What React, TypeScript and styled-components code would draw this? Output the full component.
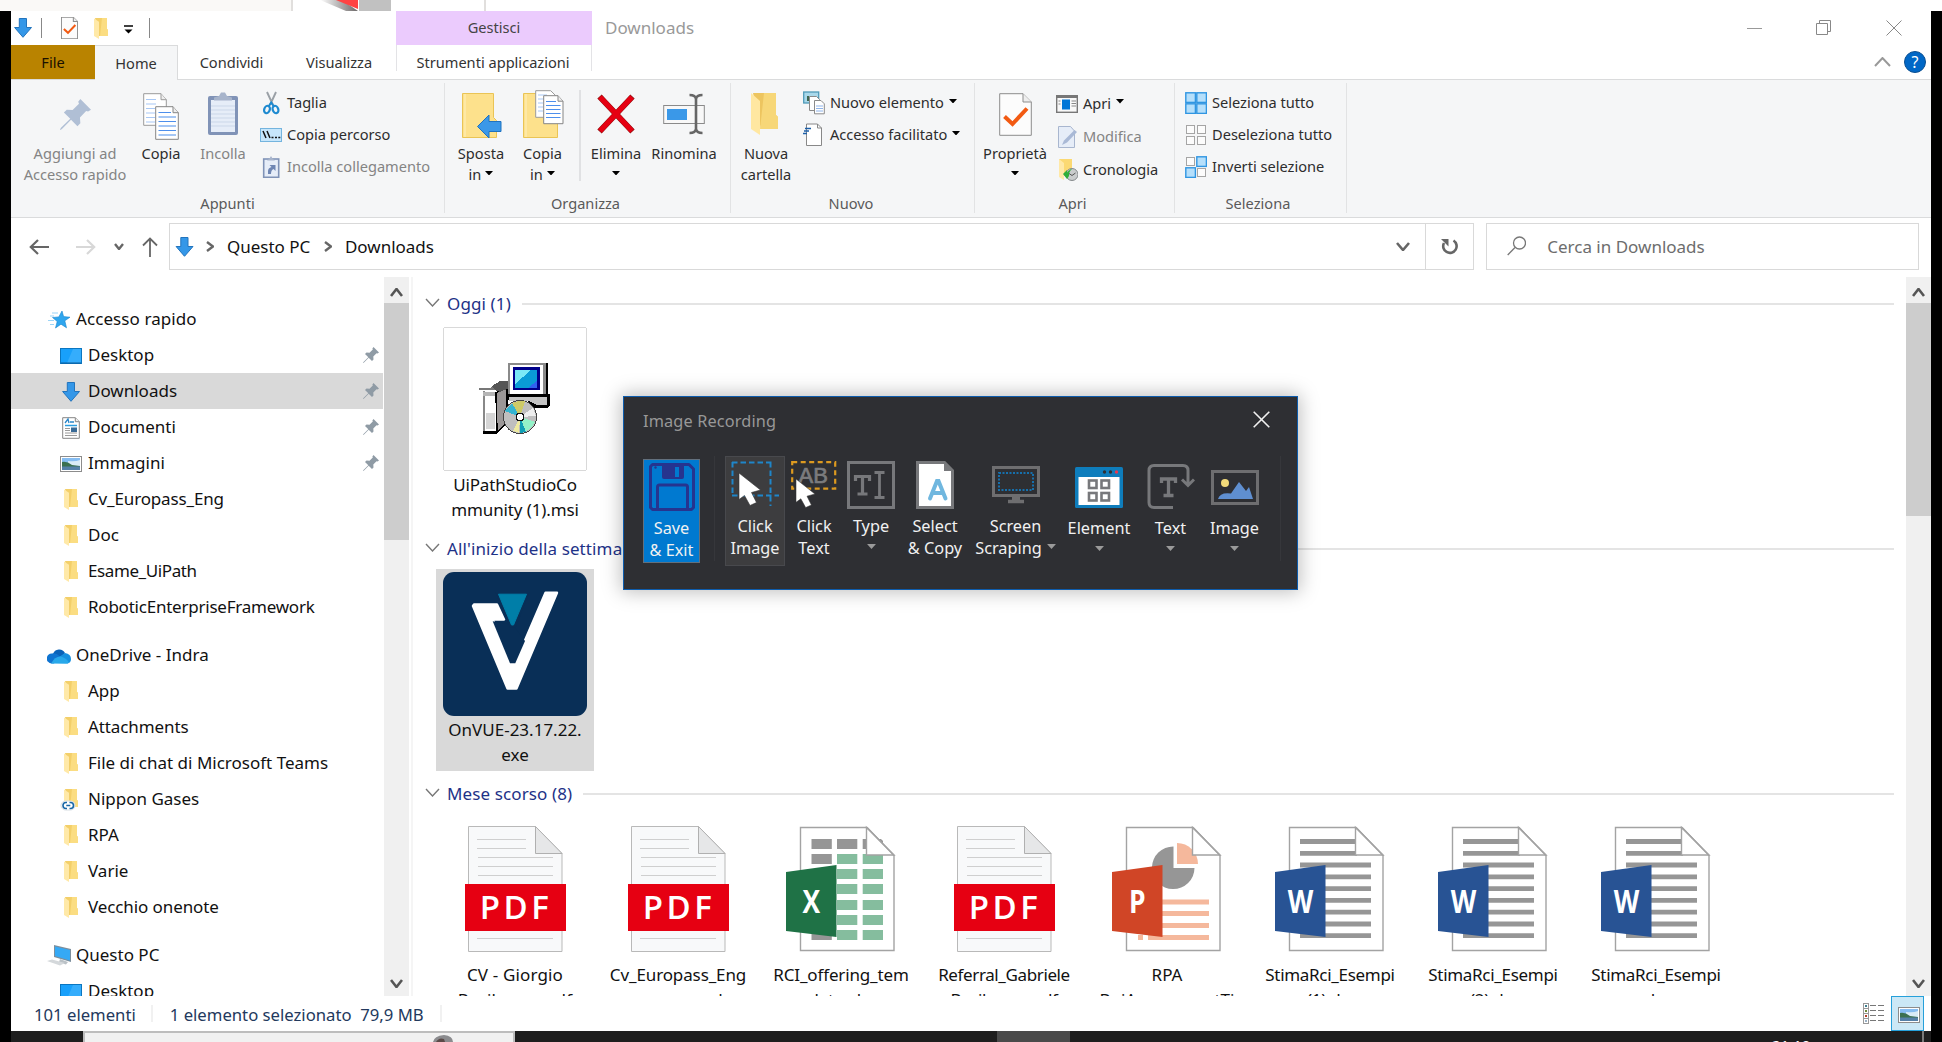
import React from "react";
import styled, { createGlobalStyle, css } from "styled-components";

const Global = createGlobalStyle`
  * { box-sizing: border-box; }
  html, body { margin: 0; padding: 0; background: #000; overflow: hidden; }
  body { font-family: "Noto Sans", "Open Sans", "Liberation Sans", sans-serif; font-size: 17px; color: #111; }
  svg { display: block; flex: none; }
`;

/* ---------- shell ---------- */
const Screen = styled.div`
  position: relative;
  width: 1942px;
  height: 1042px;
  display: flex;
  flex-direction: column;
  background: #000;
  overflow: hidden;
  white-space: nowrap;
`;
const TopStrip = styled.div`
  height: 11px;
  flex: none;
  display: flex;
  background: #fff;
`;
const StripPart = styled.div<{ w: number; bg?: string; line?: boolean }>`
  width: ${(p) => p.w}px;
  background: ${(p) => p.bg || "#fff"};
  border-right: ${(p) => (p.line ? "2px solid #e1dfdd" : "0")};
`;
const Window = styled.div`
  width: 1920px;
  height: 1020px;
  margin-left: 11px;
  background: #fff;
  display: flex;
  flex-direction: column;
`;
const Taskbar = styled.div`
  width: 1920px;
  height: 11px;
  margin-left: 11px;
  background: #1e1e1e;
  display: flex;
  overflow: hidden;
`;
const TaskSearch = styled.div`
  margin-left: 72px;
  width: 432px;
  height: 20px;
  background: #f1f1f1;
  border: 2px solid #bdbdbd;
  border-bottom: 0;
  padding-left: 346px;
`;
const TaskActive = styled.div`
  margin-left: 482px;
  width: 73px;
  background: #4a4a4a;
`;
const Clock = styled.div`
  margin-left: 702px;
  width: 150px;
  padding-top: 5px;
  color: #fff;
  font-size: 15px;
  line-height: 18px;
`;
const TaskEdge = styled.div`
  width: 2px;
  background: #7a7a7a;
`;

/* ---------- title bar ---------- */
const TitleBar = styled.div`
  height: 34px;
  display: flex;
  align-items: center;
`;
const QuickBar = styled.div`
  width: 385px;
  height: 34px;
  padding-left: 3px;
  display: flex;
  align-items: center;
`;
const Divider = styled.div<{ l: number; r: number }>`
  width: 1px;
  height: 20px;
  background: #888;
  margin: 0 ${(p) => p.r}px 0 ${(p) => p.l}px;
`;
const ManageTab = styled.div`
  width: 196px;
  height: 34px;
  background: #ebcbfd;
  color: #444;
  font-size: 14.6px;
  line-height: 32px;
  text-align: center;
`;
const WindowTitle = styled.div`
  margin-left: 13px;
  line-height: 34px;
  color: #999;
  flex: 1;
`;
const Controls = styled.div`
  display: flex;
  width: 184px;
  gap: 54px;
  align-items: center;
`;

/* ---------- tabs ---------- */
const Tabs = styled.div`
  height: 35px;
  display: flex;
  border-bottom: 1px solid #dadbdc;
`;
const Tab = styled.div<{ w: number; kind?: "file" | "active" | "tool" }>`
  width: ${(p) => p.w}px;
  height: 34px;
  line-height: 34px;
  text-align: center;
  font-size: 14.6px;
  color: #333;
  ${(p) =>
    p.kind === "file" &&
    css`
      background: #b98300;
      color: #1a1000;
    `}
  ${(p) =>
    p.kind === "active" &&
    css`
      height: 35px;
      background: #f5f6f7;
      border: 1px solid #dadbdc;
      border-bottom: 0;
      border-left: 0;
    `}
  ${(p) =>
    p.kind === "tool" &&
    css`
      border: solid #e3e3e6;
      border-width: 0 1px;
      height: 26px;
      padding-right: 2px;
    `}
`;
const TabsEnd = styled.div`
  margin-left: auto;
  display: flex;
  align-items: center;
  gap: 13px;
  padding-right: 5px;
`;
const Help = styled.div`
  width: 22px;
  height: 22px;
  border-radius: 50%;
  border: 1px solid #0b4f91;
  background: #0067c6;
  color: #fff;
  font-size: 16px;
  line-height: 20px;
  text-align: center;
`;

/* ---------- ribbon ---------- */
const Ribbon = styled.div`
  height: 138px;
  background: #f5f6f7;
  border-bottom: 1px solid #dadbdc;
  display: flex;
  padding: 3px 0 4px;
`;
const Group = styled.div<{ w: number }>`
  width: ${(p) => p.w}px;
  border-right: 1px solid #e2e3e4;
  display: flex;
  flex-direction: column;
`;
const GroupBody = styled.div<{ l: number }>`
  display: flex;
  height: 109px;
  padding-left: ${(p) => p.l}px;
`;
const GroupName = styled.div<{ r?: number }>`
  padding-right: ${(p) => p.r || 0}px;
  text-align: center;
  font-size: 14.6px;
  line-height: 24px;
  height: 22px;
  color: #5a5a5a;
`;
const Big = styled.div<{ w: number; l?: number; off?: boolean }>`
  width: ${(p) => p.w}px;
  margin-left: ${(p) => p.l || 0}px;
  padding-top: 5px;
  display: flex;
  flex-direction: column;
  align-items: center;
  font-size: 14.6px;
  line-height: 21px;
  color: ${(p) => (p.off ? "#848484" : "#2d2d2d")};
`;
const BigIcon = styled.div`
  height: 52px;
  margin-bottom: 3px;
  display: flex;
  align-items: center;
`;
const Line = styled.div`
  height: 21px;
  display: flex;
  align-items: center;
  gap: 4px;
  & > svg { margin-bottom: 3px; }
`;
const Stack = styled.div<{ l: number; row?: number; t?: number }>`
  margin-left: ${(p) => p.l}px;
  padding-top: ${(p) => p.t ?? 4}px;
  display: grid;
  grid-auto-rows: ${(p) => p.row || 32}px;
  align-content: start;
`;
const Small = styled.div<{ off?: boolean }>`
  display: flex;
  align-items: center;
  gap: 5px;
  font-size: 14.6px;
  color: ${(p) => (p.off ? "#848484" : "#2d2d2d")};
  & > span { margin-top: -2px; }
  & > span + svg { margin-bottom: 4px; }
`;
const ThickSep = styled.div`
  width: 2px;
  height: 91px;
  margin: 7px 0 0 6px;
  background: #e0e1e3;
`;

/* ---------- address row ---------- */
const AddressRow = styled.div`
  height: 59px;
  padding: 5px 12px 0 0;
  display: flex;
`;
const NavButtons = styled.div`
  width: 158px;
  height: 47px;
  padding-left: 18px;
  display: flex;
  align-items: center;
`;
const Gap = styled.div<{ w: number }>`
  width: ${(p) => p.w}px;
  flex: none;
`;
const Field = styled.div<{ w: number }>`
  width: ${(p) => p.w}px;
  height: 47px;
  border: 1px solid #d9d9d9;
  display: flex;
  align-items: center;
`;
const Crumb = styled.span<{ w: number }>`
  width: ${(p) => p.w}px;
  line-height: 45px;
  height: 45px;
  color: #111;
`;
const RefreshCell = styled.div`
  width: 48px;
  height: 45px;
  margin-left: auto;
  border-left: 1px solid #d9d9d9;
  display: flex;
  align-items: center;
  justify-content: center;
`;
const SearchText = styled.span`
  margin-left: 21px;
  line-height: 46px;
  height: 45px;
  color: #6d6d6d;
`;
const FieldEnd = styled.div`
  margin-left: auto;
  display: flex;
  align-items: center;
  gap: 15px;
`;

/* ---------- body ---------- */
const Body = styled.div`
  height: 719px;
  display: flex;
  overflow: hidden;
`;
const Tree = styled.div`
  width: 373px;
  padding-top: 24px;
  overflow: hidden;
`;
const TreeRow = styled.div<{ root?: boolean; selected?: boolean; gap?: boolean }>`
  height: 36px;
  width: 372px;
  margin-top: ${(p) => (p.gap ? 12 : 0)}px;
  padding: 0 4px 0 ${(p) => (p.root ? 36 : 48)}px;
  background: ${(p) => (p.selected ? "#d9d9d9" : "transparent")};
  display: flex;
  align-items: center;
`;
const TreeIcon = styled.div`
  width: 24px;
  height: 36px;
  padding-top: 1px;
  display: flex;
  align-items: center;
  justify-content: center;
`;
const TreeText = styled.span<{ ls?: number }>`
  margin-left: 5px;
  flex: 1;
  line-height: 36px;
  height: 36px;
  letter-spacing: ${(p) => p.ls || 0}px;
`;
const ScrollBar = styled.div<{ w: number }>`
  width: ${(p) => p.w}px;
  background: #f0f0f0;
  display: flex;
  flex-direction: column;
  align-items: center;
`;
const ScrollEnd = styled.div<{ t?: number }>`
  height: 26px;
  padding-top: ${(p) => p.t || 0}px;
  display: flex;
  align-items: center;
`;
const Thumb = styled.div<{ h: number }>`
  width: 100%;
  height: ${(p) => p.h}px;
  background: #cdcdcd;
  margin-bottom: auto;
`;
const Pane = styled.div`
  width: 1495px;
  margin-left: 2px;
  border-left: 2px solid #f5f5f5;
  padding-top: 9px;
  overflow: hidden;
`;
const Section = styled.div`
  height: 245px;
`;
const SectionHead = styled.div`
  height: 36px;
  padding: 0 12px 0 12px;
  display: flex;
  align-items: center;
  color: #1e3287;
  letter-spacing: 0.12px;
  & > svg { margin-bottom: 3px; }
  & > span { margin: -2px 11px 0 7px; }
`;
const Rule = styled.div`
  flex: 1;
  height: 2px;
  background: #e4e4e4;
`;
const Tiles = styled.div`
  display: flex;
  gap: 5px;
  margin: 2px 0 0 23px;
`;
const Tile = styled.div<{ selected?: boolean }>`
  width: 158px;
  height: 202px;
  padding-top: 3px;
  background: ${(p) => (p.selected ? "#d9d9d9" : "transparent")};
  display: flex;
  flex-direction: column;
  align-items: center;
  & > svg { margin-bottom: 1px; }
`;
const TileText = styled.div<{ ls?: number }>`
  line-height: 25px;
  text-align: center;
  letter-spacing: ${(p) => p.ls || 0}px;
`;

/* ---------- status bar ---------- */
const Status = styled.div`
  height: 35px;
  display: flex;
  align-items: center;
  padding-left: 23px;
  font-size: 16.7px;
  color: #23395d;
  & > span { margin-top: 1px; }
`;
const StatusSep = styled.div<{ l: number; r: number }>`
  width: 2px;
  height: 17px;
  margin: 0 ${(p) => p.r}px 0 ${(p) => p.l}px;
  background: #f1f1f1;
`;
const Views = styled.div`
  margin-left: auto;
  padding-right: 7px;
  display: flex;
  align-items: center;
  gap: 7px;
`;
const ViewOn = styled.div`
  width: 33px;
  height: 35px;
  border: 1px solid #26a0da;
  background: #cbe8f6;
  padding: 10px 0 0 6px;
`;

/* ---------- recorder ---------- */
const Recorder = styled.div`
  position: absolute;
  left: 623px;
  top: 396px;
  width: 675px;
  height: 194px;
  background: #2e2f33;
  border: 1px solid #0d5cad;
  box-shadow: 0 0 18px 2px rgba(0, 0, 0, 0.26);
  color: #f1f1f1;
  font-size: 16.3px;
`;
const RecHead = styled.div`
  height: 50px;
  padding: 0 27px 2px 19px;
  display: flex;
  align-items: center;
  justify-content: space-between;
  color: #989898;
  & > span { letter-spacing: 0.15px; }
  & > svg { margin-bottom: 3px; }
`;
const RecTools = styled.div`
  display: flex;
  align-items: flex-start;
  padding-top: 9px;
`;
const RecSep = styled.div<{ l: number; r: number }>`
  width: 1px;
  height: 105px;
  margin: 0 ${(p) => p.r}px 0 ${(p) => p.l}px;
  background: #36373b;
`;
const Tool = styled.div<{ w: number; kind?: "save" | "on"; drop?: number; l?: number }>`
  width: ${(p) => p.w}px;
  height: 110px;
  margin-left: ${(p) => p.l || 0}px;
  padding-top: ${(p) => 4 + (p.drop || 0)}px;
  border: 1px solid transparent;
  display: flex;
  flex-direction: column;
  align-items: center;
  ${(p) =>
    p.kind === "on" &&
    css`
      background: #3d3d3f;
      border-color: #48494d;
    `}
  ${(p) =>
    p.kind === "save" &&
    css`
      height: 104px;
      margin-top: 3px;
      padding-top: 3px;
      background: #0079d0;
      border-color: #63707d;
    `}
`;
const ToolIcon = styled.div`
  height: 48px;
  margin-bottom: 6px;
  display: flex;
  align-items: center;
`;
const ToolLine = styled.div`
  height: 22px;
  line-height: 22px;
  display: flex;
  align-items: center;
  gap: 5px;
  & > svg { margin-bottom: 4px; }
`;

/* ---------- glyphs ---------- */
const Caret = ({ w = 8, color = "#000" }: { w?: number; color?: string }) => (
  <svg width={w} height={w / 2 + 0.5} viewBox="0 0 8 4.5"><path d="M0 0h8L4 4.5z" fill={color} /></svg>
);
const Chevron = ({ w = 14, h = 8, dir = "down", color = "#666", sw = 2 }: any) => {
  const d = {
    down: `M1 1L${w / 2} ${h - 1}L${w - 1} 1`,
    up: `M1 ${h - 1}L${w / 2} 1L${w - 1} ${h - 1}`,
    right: `M1 1L${w - 1} ${h / 2}L1 ${h - 1}`,
  }[dir as "down"];
  return <svg width={w} height={h}><path d={d} fill="none" stroke={color} strokeWidth={sw} /></svg>;
};
const DownArrow = ({ w = 18, h = 20 }) => (
  <svg width={w} height={h} viewBox="0 0 18 20">
    <path d="M5.3.5h7.2v9h5L9 19.3.6 9.5h4.7z" fill="#3497e8" stroke="#2274bd" />
  </svg>
);
const FolderIcon = ({ w = 14, h = 21, link = false }) => (
  <svg width={w} height={h} viewBox="0 0 14 21" overflow="visible">
    <path d="M1 0h12v11l1 1v6H5z" fill="#f3cf69" />
    <path d="M8 0h5v11l1 1v6H6z" fill="#fbdd82" />
    <path d="M0 0.5l5 3.2v17.3L0 18z" fill="#ffe9a8" />
    {link && (
      <g>
        <rect x="-3" y="12" width="14" height="9" rx="4.5" fill="#fff" stroke="#d8dde2" />
        <path d="M3 13.5H2a3 3 0 000 6h1M5.500 13.500h1a3 3 0 010 6h-1M2.300 16.500h4" fill="none" stroke="#1766a6" strokeWidth="1.6" />
      </g>
    )}
  </svg>
);
const CheckDoc = ({ w, h, sw = 1 }: { w: number; h: number; sw?: number }) => (
  <svg width={w} height={h} viewBox="0 0 33 43">
    <path d="M.7.7H24l8.300 8.300v33.300H.7z" fill="#fcfcfc" stroke="#8d8d8d" strokeWidth={sw} />
    <path d="M24 .7V9h8.300" fill="#eee" stroke="#8d8d8d" strokeWidth={sw} />
    <path d="M5.500 23.500l8 7.500L28 15.500" fill="none" stroke="#f25a12" strokeWidth="4" />
  </svg>
);
const PinIcon = ({ size = 16, color = "#8f9ba5" }) => (
  <svg width={size} height={size} viewBox="0 0 16 16">
    <path d="M10.500 0L16 5.500l-1.500 1-1-.3-3.200 3.300.2 3-1.500 1.500-3.300-3.300L1 15.500.2 16 0 15.700l.5-.8 4.800-4.700L2 7l1.500-1.500 3 .2 3.300-3.300-.4-1z" fill={color} />
  </svg>
);
const CopyPages = ({ w = 36, h = 51 }) => (
  <svg width={w} height={h} viewBox="0 0 36 51">
    <path d="M.7 4.700h17.300l5.300 6v25.600H.7z" fill="#fff" stroke="#9a9a9a" />
    <path d="M18 4.700v6h5.300" fill="#eee" stroke="#9a9a9a" />
    <path d="M3 10.500h10M3 15h10M3 19.500h9M3 24h9M3 28.500h9M3 33h9" stroke="#a8c8f5" strokeWidth="1.200" />
    <path d="M12.700 17.700H30l5.300 6v26.600H12.700z" fill="#fff" stroke="#858585" />
    <path d="M30 17.700v6h5.300" fill="#eee" stroke="#858585" />
    <path d="M15.500 23.500H28M15.500 28h17.500M15.500 32.500h17.500M15.500 37h17.500M15.500 41.500h17.500M15.500 46h17.500" stroke="#4d8fec" strokeWidth="1.200" />
  </svg>
);
const Clipboard = () => (
  <svg width="32" height="44" viewBox="0 0 32 44">
    <rect x="1" y="4" width="30" height="39" rx="2" fill="#8093b7" />
    <rect x="4" y="8" width="24" height="32" fill="#e6edf8" />
    <path d="M4 14h24M4 18h24M4 22h24M4 26h24M4 30h24M4 34h24" stroke="#cbd7e9" />
    <path d="M7 8.500V5.500L12 4l2-3.500h4L20 4l5 1.500v3z" fill="#a7b4cb" />
  </svg>
);
const Scissors = () => (
  <svg width="22" height="24" viewBox="0 0 22 24">
    <path d="M7 1l6 13M16 1L10 14" stroke="#9aa0a6" strokeWidth="1.900" fill="none" />
    <ellipse cx="7" cy="18.500" rx="2.800" ry="3.800" fill="none" stroke="#1e8ad0" strokeWidth="2.200" transform="rotate(20 7 18.500)" />
    <ellipse cx="15.500" cy="18.500" rx="2.800" ry="3.800" fill="none" stroke="#1e8ad0" strokeWidth="2.200" transform="rotate(-20 15.500 18.500)" />
    <path d="M8.500 15.500l2.700-4 2.700 4" fill="none" stroke="#1e8ad0" strokeWidth="2" />
  </svg>
);
const PathIcon = () => (
  <svg width="22" height="14" viewBox="0 0 22 14">
    <rect x=".5" y=".5" width="21" height="13" fill="#c7e6fb" stroke="#74b4de" />
    <path d="M3 3l3 7M7 3l3 7" stroke="#111" strokeWidth="1.500" />
    <path d="M11.500 9.500h2M15 9.500h2M18.300 9.500h2" stroke="#111" strokeWidth="1.600" />
  </svg>
);
const LinkPaste = () => (
  <svg width="22" height="22" viewBox="0 0 22 22">
    <rect x="3.700" y="3" width="15" height="18.300" fill="#e6edf8" stroke="#8093b7" strokeWidth="1.600" />
    <path d="M7 4.500l2.500-2L11 0l1.500 2.500 2.500 2z" fill="#a7b4cb" />
    <path d="M8 18v-3q0-3 3.500-4L9.500 9h6v6l-2-2q-2.500 1-2.500 5z" fill="#6f86b3" />
  </svg>
);
const MoveTo = () => (
  <svg width="42" height="51" viewBox="0 0 42 51">
    <path d="M2.500 4.500h31v24l3 3v17h-34z" fill="#fde18c" stroke="#eac455" />
    <path d="M5 5v43" stroke="#fff0bd" />
    <path d="M17.500 37.500L29 26v6.500h12v10H29V49z" fill="#3b98e8" stroke="#1f72c0" />
  </svg>
);
const CopyTo = () => (
  <svg width="44" height="51" viewBox="0 0 44 51">
    <path d="M2.500 4.500h30l4 27v17h-34z" fill="#fde18c" stroke="#eac455" />
    <path d="M5 5v43" stroke="#fff0bd" />
    <path d="M14.700 1.700h15l5 5v21.600h-20z" fill="#fff" stroke="#9a9a9a" />
    <path d="M17 6h9M17 10h6M17 14h5M17 18h5M17 22h5" stroke="#a8c8f5" />
    <path d="M22.700 6.700H37l5 5.500v22.500H22.700z" fill="#fff" stroke="#858585" />
    <path d="M37 6.700v5.500h5" fill="#eee" stroke="#858585" />
    <path d="M25 12.500h10M25 16.500h14.500M25 20.500h14.500M25 24.500h14.500M25 28.500h14.500" stroke="#4d8fec" strokeWidth="1.200" />
  </svg>
);
const RedX = () => (
  <svg width="38" height="40" viewBox="0 0 38 40">
    <path d="M2.500 2.500l33 35M35.500 2.500l-33 35" stroke="#8d1414" strokeWidth="6" />
    <path d="M3 3l32 34M35 3L3 37" stroke="#e60012" strokeWidth="5" />
  </svg>
);
const RenameIcon = () => (
  <svg width="42" height="42" viewBox="0 0 42 42">
    <rect x=".7" y="12.500" width="40.600" height="18" fill="#f8f8f8" stroke="#8a8a8a" />
    <rect x="4" y="16" width="20" height="11" fill="#3a98e8" />
    <path d="M26.500 2q6 0 6.500 4v30q-.5 4-6.500 4M39.500 2q-6 0-6.500 4M33 36q.5 4 6.500 4" fill="none" stroke="#666" strokeWidth="2.600" />
  </svg>
);
const BigFolder = () => (
  <svg width="30" height="44" viewBox="0 0 30 44">
    <path d="M2 1h23v22l2 2v12H10z" fill="#edc55f" />
    <path d="M13 1h12v22l2 2v12H9z" fill="#f7d778" />
    <path d="M0 1l9 8v34L0 37z" fill="#ffe7a1" />
  </svg>
);
const NewItem = () => (
  <svg width="22" height="24" viewBox="0 0 22 24">
    <rect x=".7" y="1" width="15" height="11" fill="#a9d8ea" stroke="#4f9ab8" strokeWidth="1.300" />
    <path d="M4 10V5h2v3l3-2 3 4z" fill="#3c6650" />
    <path d="M6.500 5.500h7l3 3v11h-10z" fill="#fff" stroke="#8a8a8a" />
    <path d="M11.500 9.500H18l3.300 3.300v10H11.500z" fill="#fff" stroke="#8a8a8a" />
    <path d="M13 15h7M13 17.500h7M13 20h7" stroke="#8fb4ea" />
  </svg>
);
const EasyAccess = () => (
  <svg width="22" height="24" viewBox="0 0 22 24">
    <path d="M3.500 1h11l4 4v17.500h-15z" fill="#fff" stroke="#888" />
    <path d="M14.500 1v4h4" fill="none" stroke="#888" />
    <path d="M2 5.500h6M1 8h5M0 10.500h4" stroke="#1c5fa8" strokeWidth="1.300" />
  </svg>
);
const OpenIcon = () => (
  <svg width="22" height="18" viewBox="0 0 22 18">
    <rect x=".7" y=".7" width="20.600" height="16.600" fill="#f8f8f8" stroke="#777" strokeWidth="1.400" />
    <path d="M1 2h20" stroke="#777" strokeWidth="2" />
    <rect x="6" y="4.500" width="8" height="10" fill="#0076d7" />
    <path d="M2.500 6h2M2.500 9h2M15.500 6H20M15.500 8.500H20M15.500 11H20" stroke="#888" />
  </svg>
);
const EditIcon = () => (
  <svg width="22" height="24" viewBox="0 0 22 24">
    <path d="M2.500 1.500h12l4 4.500v16.500h-16z" fill="#e6edf8" stroke="#a8b6cf" />
    <path d="M6 20l2-4.500L18.500 5l2.500 2L11 17.500z" fill="#a9b9d6" />
  </svg>
);
const HistoryIcon = () => (
  <svg width="22" height="24" viewBox="0 0 22 24">
    <path d="M3 1h13v17H6z" fill="#fbd973" />
    <path d="M3 1l5 4v17l-5-3z" fill="#ffe9a8" />
    <circle cx="16" cy="16.500" r="6" fill="#c9cccd" stroke="#84898b" />
    <path d="M13 15.500l3 2 3.500-2.500" fill="none" stroke="#555" />
    <path d="M7 16l4-4v2.500q3-3.500 5-3.500-3.500 3-3 7l-2 3z" fill="#2fae3b" />
  </svg>
);
const SelectGrid = ({ on }: { on: boolean[] }) => (
  <svg width="22" height="22" viewBox="0 0 22 22">
    {on.map((v, i) => {
      const x = (i % 2) * 11, y = Math.floor(i / 2) * 11;
      return v ? (
        <rect key={i} x={x + 0.8} y={y + 0.8} width="9.600" height="9.600" fill="#b5dffb" stroke="#3096e2" strokeWidth="1.400" />
      ) : (
        <rect key={i} x={x + 1.5} y={y + 1.5} width="8" height="8" fill="#fcfcfc" stroke="#a5a5a5" />
      );
    })}
  </svg>
);
const StarIcon = () => (
  <svg width="22" height="18" viewBox="0 0 22 18">
    <path d="M14 0l1.600 5.600 6.400.6-5.200 3.600 1.700 7-5.500-3.600L7.500 17l1.700-6.500L4.500 6.500l6.300-.6z" fill="#2fa6ee" stroke="#1785cf" strokeWidth=".6" />
    <path d="M4 2h6M2 5h4M0 9.500h6M2 13.500h4" stroke="#9bd4f7" strokeWidth="1.200" />
  </svg>
);
const DesktopIcon = () => (
  <svg width="22" height="16" viewBox="0 0 22 16">
    <rect x=".5" y=".5" width="21" height="15" fill="#18a0fb" stroke="#0b76c0" />
    <path d="M7 15L13 1h8v14z" fill="#35adfc" />
    <path d="M1 15h20" stroke="#0a5d9c" />
  </svg>
);
const DocIcon = () => (
  <svg width="18" height="22" viewBox="0 0 18 22">
    <path d="M.7.7h12.600l4 4v16.600H.7z" fill="#fff" stroke="#858585" />
    <path d="M13.300.7v4h4" fill="#eee" stroke="#858585" />
    <path d="M3 6l3-4 1 4M8 5h4" stroke="#2a86c8" fill="none" strokeWidth="1.300" />
    <path d="M3 8.500h12" stroke="#2a9de0" strokeWidth="1.500" />
    <path d="M3 11.500h5M3 13.500h5M3 16h12M3 18.500h12" stroke="#9a9a9a" />
    <rect x="9" y="10.500" width="6" height="4.500" fill="#386a96" />
  </svg>
);
const PhotoIcon = () => (
  <svg width="22" height="16" viewBox="0 0 22 16">
    <rect x=".5" y=".5" width="21" height="15" fill="#fff" stroke="#8c8c8c" />
    <rect x="2" y="2" width="18" height="12" fill="#86bdf2" />
    <path d="M8 5q7 1 12-1v6H8z" fill="#d9ebf7" />
    <path d="M2 6q5-1 10 3l8 1v1H2z" fill="#3b7050" />
    <path d="M2 10.500h18V14H2z" fill="#5580a8" />
  </svg>
);
const CloudIcon = () => (
  <svg width="24" height="16" viewBox="0 0 24 16">
    <path d="M6 6a6.500 6.500 0 0112-1L14 10z" fill="#0a62b8" />
    <path d="M4.500 15.500A4.700 4.700 0 015 5.500q4-1 8 3l-6 7z" fill="#0f74d1" />
    <path d="M12 9l6-4q6 1 6 6 0 4-4 4.500z" fill="#1690df" />
    <path d="M4 15.500Q8 8 14 8.500q6 2 8 6-1 1.300-3 1.300z" fill="#28a8ea" />
  </svg>
);
const PcIcon = () => (
  <svg width="24" height="21" viewBox="0 0 24 21">
    <path d="M7 0l17 4v13L7 12z" fill="#7d8f9d" />
    <path d="M8 1.500L23 5v10.500L8 11z" fill="#35a9f5" />
    <path d="M13 14l8 3-2 2.500-7-2z" fill="#b9c0c5" />
    <path d="M0 16l5-1.500L18 18l-5 2.500z" fill="#d4d8db" />
  </svg>
);
const Refresh = () => (
  <svg width="17" height="18" viewBox="0 0 17 18">
    <path d="M12.500 2.500A6.700 6.700 0 113 5" fill="none" stroke="#666" strokeWidth="2.600" />
    <path d="M0 1h7.500v7.500z" fill="#666" />
  </svg>
);

/* ---------- file thumbnails (144 x 144) ---------- */
const PdfThumb = () => (
  <svg width="144" height="144">
    <path d="M25.500 9.500h67l26.500 27v98h-93.500z" fill="#f8f9fa" stroke="#b9b9b9" />
    <path d="M92.500 9.500v27H119z" fill="#e6e7e8" stroke="#b0b0b0" />
    <path d="M34 22.500h49M34 31.500h49M35 40.500h75M35 49.500h75M35 58.500h75M34 121.500h76" stroke="#cfcfcf" />
    <rect x="22" y="67" width="101" height="47" fill="#e60012" />
    <text x="73" y="101.500" textAnchor="middle" fill="#fff" fontFamily="Open Sans" fontWeight="600" fontSize="33" letterSpacing="3.500">PDF</text>
  </svg>
);
const OfficePage = ({ color, letter, children }: { color: string; letter: string; children: React.ReactNode }) => (
  <svg width="144" height="144">
    <path d="M31.500 10.500H98l27 28v95H31.500z" fill="#fff" stroke="#a3a3a3" strokeWidth="1.400" />
    {children}
    <path d="M97.500 10.500v27.500H125z" fill="#fff" stroke="#a3a3a3" strokeWidth="1.400" />
    <path d="M99 9.500h28v27z" fill="#fff" />
    <path d="M98 10.500l27 28" stroke="#a3a3a3" strokeWidth="1.400" />
    <path d="M17 55l50.500-7v72L17 114z" fill={color} />
    <text x="42" y="96" textAnchor="middle" fill="#fff" fontFamily="Open Sans" fontWeight="700" fontSize="33" transform="translate(8.800 0) scale(.8 1)">{letter}</text>
  </svg>
);
const ExcelThumb = () => (
  <OfficePage color="#1f7246" letter="X">
    {[22, 37, 52, 67, 83, 98, 113].map((y, r) =>
      [42.5, 68, 93.7].map((x, c) => (
        <rect key={`${r}-${c}`} x={x} y={y} width="20.300" height="10" fill={r === 0 || c === 0 ? "#969696" : "#85bd9e"} />
      ))
    )}
  </OfficePage>
);
const PptThumb = () => (
  <OfficePage color="#d04526" letter="P">
    <path d="M78.500 29.500v21.500h21a21.300 21.300 0 11-21-21.500z" fill="#969696" />
    <path d="M82 26a21 21 0 0121 21H82z" fill="#f5b89c" />
    <path d="M53 85h61M53 96.500h61M53 108.500h61M53 120.500h61M43 120.500h5" stroke="#f5b89c" strokeWidth="5" />
  </OfficePage>
);
const WordThumb = () => (
  <OfficePage color="#285394" letter="W">
    <path d="M42 24.500h57M42 36.300h57M42 48h71M42 59.800h71M42 71.600h71M42 83.400h71M42 95.200h71M42 107h71M42 118.700h71" stroke="#969696" strokeWidth="4.800" />
  </OfficePage>
);
const MsiThumb = () => (
  <svg width="144" height="144" shapeRendering="crispEdges">
    <rect x=".5" y=".5" width="143" height="143" rx="2" fill="#fff" stroke="#d9d9d9" />
    <path d="M40 64h14v41H40z" fill="#fff" />
    <path d="M40.500 64v41" stroke="#888" strokeWidth="2" />
    <path d="M36 62.500h16l12-7h-8l-8 5H36z" fill="#777" />
    <path d="M40 65h14v4H40z" fill="#b5b5b5" />
    <path d="M53 66l8-6h3v36l-10 9z" fill="#9b9797" stroke="#000" strokeWidth="1.500" />
    <path d="M49 59l8-5h9v7l-9 4-5-2z" fill="#555" />
    <path d="M40 105h14" stroke="#000" strokeWidth="3" />
    <path d="M43 86h9v16h-9z" fill="#d5d5d5" />
    <rect x="65" y="36" width="40" height="34" fill="#000" />
    <rect x="65" y="36" width="38" height="32" fill="#8a8a8a" />
    <rect x="67" y="38" width="33" height="29" fill="#fff" />
    <rect x="70" y="40" width="27" height="23" fill="#00008a" />
    <rect x="72" y="43" width="22" height="18" fill="#0a9bd6" />
    <path d="M72 43h16L72 57z" fill="#7be8f6" />
    <path d="M94 54v7h-9z" fill="#2f63f0" />
    <path d="M64 67h43v12l-3 2H88l-4-8H64z" fill="#000" />
    <path d="M66 70h38v8H94l-8-4H66z" fill="#c4c4c4" />
    <circle cx="77" cy="90" r="17" fill="#444" />
    <circle cx="77" cy="90" r="16" fill="#bfbfbf" />
    <path d="M77 90L69 76l6-2h7z" fill="#cdca67" />
    <path d="M77 90L62 84l7-8z" fill="#35b4d0" />
    <path d="M77 90l5 15 6-4 4-6z" fill="#93f3c8" />
    <path d="M77 90v16l6-1z" fill="#0f9fb5" />
    <path d="M77 90l-7 14 6 2z" fill="#eeeaa0" />
    <path d="M77 90l13-9 3 8z" fill="#eee" />
    <circle cx="77" cy="90" r="4.500" fill="#111" />
    <circle cx="77" cy="90" r="3" fill="#fff" />
  </svg>
);
const VueThumb = () => (
  <svg width="144" height="144">
    <rect width="144" height="144" rx="11" fill="#092f57" />
    <path d="M31 32.500h23l7 15H49.700l17.300 43.500h5.300L102.500 20.700h11.500L73.500 116.500h-9L30 34z" fill="#fff" stroke="#fff" strokeWidth="2.400" strokeLinejoin="round" />
    <path d="M49.700 49.300L67 91.300h5.300L82 69 70 53z" fill="#092f57" />
    <path d="M52.500 20h34L72.500 55.500h-5.500z" fill="#092f57" />
    <path d="M55.500 22.200h28l-13 30.800h-2z" fill="#007ea8" stroke="#007ea8" strokeLinejoin="round" />
  </svg>
);

/* ---------- recorder icons ---------- */
const Pointer = ({ x, y, s = 1 }: { x: number; y: number; s?: number }) => (
  <path transform={`translate(${x} ${y}) scale(${s})`} d="M0 0V26.500L5.500 22.500 11 32.500 17.500 29.500 12.500 19.500 21.500 17z" fill="#fff" stroke="#333" strokeWidth=".6" />
);
const SaveIcon = () => (
  <svg width="46" height="48" viewBox="0 0 46 48">
    <path d="M1.500 3.500l2-2H40l4.500 4.500v38.500l-2 2h-39l-2-2z" fill="none" stroke="#26348f" strokeWidth="3" strokeLinejoin="round" />
    <path d="M13 1h22v13q0 2-2 2H15q-2 0-2-2z" fill="#26348f" />
    <rect x="26" y="4" width="4" height="10" fill="#0079d0" />
    <path d="M8.500 46V24q0-2 2-2h26q2 0 2 2v22" fill="none" stroke="#26348f" strokeWidth="3" />
    <circle cx="6.500" cy="4.500" r="1.200" fill="#26348f" />
  </svg>
);
const ClickImage = () => (
  <svg width="48" height="48">
    <path d="M1 1.500h40M1 34.500h48M1.500 1v34M39.500 1v44" fill="none" stroke="#1f86c9" strokeWidth="2" strokeDasharray="5.500 3" />
    <Pointer x={8} y={12} />
  </svg>
);
const ClickText = () => (
  <svg width="46" height="48">
    <rect x="1.200" y="1.200" width="43" height="26.500" fill="none" stroke="#dd9a20" strokeWidth="2.200" strokeDasharray="5 3.500" />
    <text x="7.500" y="22" fill="#7b7b7d" fontFamily="Liberation Sans" fontSize="22" stroke="#7b7b7d" strokeWidth=".7">AB</text>
    <Pointer x={5} y={18} s={0.88} />
  </svg>
);
const TypeIcon = () => (
  <svg width="48" height="48" fill="none" stroke="#77787b">
    <rect x="1.500" y="1.500" width="45" height="45" strokeWidth="3" />
    <path d="M8.500 20v-4.500H22.500V20M15.500 15v18M10.500 33h10" strokeWidth="3.200" />
    <path d="M27.500 11.500h10M32.500 11.500v25M27.500 36.500h10" strokeWidth="2.800" />
  </svg>
);
const SelectCopy = () => (
  <svg width="38" height="48">
    <path d="M1.500 1.500h27l8 8v37h-35z" fill="#fff" stroke="#77787b" strokeWidth="3" />
    <path d="M28 1v9h9z" fill="#77787b" />
    <path d="M14 37.500L21 20h1.500L29.500 37.500M16.500 32h10.500" fill="none" stroke="#70b7df" strokeWidth="4" strokeLinecap="round" />
  </svg>
);
const ScrapeIcon = () => (
  <svg width="48" height="38">
    <rect x="1.500" y="1.500" width="45" height="28" fill="none" stroke="#6e6e70" strokeWidth="3" />
    <rect x="7" y="7" width="34" height="17" fill="none" stroke="#1670ad" strokeWidth="2" strokeDasharray="2 1.500" />
    <path d="M24 30v5M16 35.500h16" stroke="#6e6e70" strokeWidth="3.500" />
    <path d="M20 33h8" stroke="#6e6e70" strokeWidth="4" />
  </svg>
);
const ElementIcon = () => (
  <svg width="48" height="41">
    <rect width="48" height="41" rx="1.500" fill="#0e7dbc" />
    <rect x="3.500" y="10" width="41" height="28" fill="#fff" />
    <circle cx="29.500" cy="5" r="1.700" fill="#2e2f33" /><circle cx="35.500" cy="5" r="1.700" fill="#2e2f33" /><circle cx="41.500" cy="5" r="1.700" fill="#e8384f" />
    {[[14, 13.5], [26.5, 13.5], [14, 26], [26.5, 26]].map(([x, y]) => (
      <rect key={`${x}-${y}`} x={x} y={y} width="7.500" height="7.500" fill="#fff" stroke="#77787b" strokeWidth="2.600" />
    ))}
  </svg>
);
const TextIcon = () => (
  <svg width="48" height="46" fill="none" stroke="#77787b" strokeWidth="3">
    <path d="M26 43.500H7q-5 0-5-5V6.500q0-5 5-5H36q5 0 5 5V20M35 15.500l6 6 6-6" />
    <path d="M14.500 19v-4H28.500V19M21.500 15v16M16.500 31.500h10" strokeWidth="3.300" />
  </svg>
);
const ImageIcon = () => (
  <svg width="48" height="35">
    <rect x="1.500" y="1.500" width="45" height="32" fill="none" stroke="#6e6e70" strokeWidth="3" />
    <circle cx="14" cy="13" r="4" fill="#f2da7a" />
    <path d="M7 29q2-7 13-5.500L28 12l7 9 3-4 4 12z" fill="#5f8fd0" />
  </svg>
);

/* ---------- data ---------- */
type Node = { t: string; root?: boolean; gap?: boolean; sel?: boolean; pin?: boolean; ls?: number; icon?: React.ReactNode };
const tree: Node[] = [
  { t: "Accesso rapido", root: true, icon: <StarIcon />, ls: 0.08 },
  { t: "Desktop", pin: true, icon: <DesktopIcon /> },
  { t: "Downloads", pin: true, sel: true, icon: <DownArrow /> },
  { t: "Documenti", pin: true, icon: <DocIcon /> },
  { t: "Immagini", pin: true, icon: <PhotoIcon /> },
  { t: "Cv_Europass_Eng", ls: -0.15 },
  { t: "Doc" },
  { t: "Esame_UiPath", ls: -0.4 },
  { t: "RoboticEnterpriseFramework", ls: -0.23 },
  { t: "OneDrive - Indra", root: true, gap: true, icon: <CloudIcon /> },
  { t: "App" },
  { t: "Attachments", ls: -0.1 },
  { t: "File di chat di Microsoft Teams" },
  { t: "Nippon Gases", icon: <FolderIcon link /> },
  { t: "RPA" },
  { t: "Varie" },
  { t: "Vecchio onenote", ls: -0.1 },
  { t: "Questo PC", root: true, gap: true, icon: <PcIcon /> },
  { t: "Desktop", icon: <DesktopIcon /> },
];
type FileItem = { lines: string[]; icon: React.ReactNode; sel?: boolean; ls?: number };
const sections: { name: string; files: FileItem[] }[] = [
  { name: "Oggi (1)", files: [{ lines: ["UiPathStudioCo", "mmunity (1).msi"], icon: <MsiThumb />, ls: -0.12 }] },
  { name: "All'inizio della settimana (1)", files: [{ lines: ["OnVUE-23.17.22.", "exe"], icon: <VueThumb />, sel: true }] },
  {
    name: "Mese scorso (8)",
    files: [
      { lines: ["CV - Giorgio", "Basilecera.pdf"], icon: <PdfThumb />, ls: 0.15 },
      { lines: ["Cv_Europass_Eng", "re-annexed"], icon: <PdfThumb />, ls: -0.12 },
      { lines: ["RCI_offering_tem", "plate.xlsx"], icon: <ExcelThumb />, ls: -0.15 },
      { lines: ["Referral_Gabriele", "Basilecera.pdf"], icon: <PdfThumb />, ls: -0.38 },
      { lines: ["RPA", "BpiAssessmentTi"], icon: <PptThumb /> },
      { lines: ["StimaRci_Esempi", "o (1).docx"], icon: <WordThumb />, ls: -0.3 },
      { lines: ["StimaRci_Esempi", "o (2).docx"], icon: <WordThumb />, ls: -0.3 },
      { lines: ["StimaRci_Esempi", "o.docx"], icon: <WordThumb />, ls: -0.3 },
    ],
  },
];

const BigButton = ({ icon, lines, caret, ...rest }: { icon: React.ReactNode; lines: string[]; caret?: boolean; w: number; l?: number; off?: boolean }) => (
  <Big {...rest}>
    <BigIcon>{icon}</BigIcon>
    {lines.map((s, i) => (
      <Line key={i}>{s}{caret && i === lines.length - 1 && <Caret />}</Line>
    ))}
  </Big>
);
const SmallButton = ({ icon, text, caret, off }: { icon: React.ReactNode; text: string; caret?: boolean; off?: boolean }) => (
  <Small off={off}>{icon}<span>{text}</span>{caret && <Caret />}</Small>
);
const RecButton = ({ icon, lines, caret, ...rest }: { icon: React.ReactNode; lines: string[]; caret?: boolean; w: number; kind?: "save" | "on"; drop?: number; l?: number }) => (
  <Tool {...rest}>
    <ToolIcon>{icon}</ToolIcon>
    {lines.map((s, i) => (
      <ToolLine key={i}>{s}{caret && i === lines.length - 1 && <Caret w={9} color="#9a9a9a" />}</ToolLine>
    ))}
  </Tool>
);
const Scroller = ({ w, thumb }: { w: number; thumb: number }) => (
  <ScrollBar w={w}>
    <ScrollEnd t={4}><Chevron dir="up" w={13} h={9} color="#555" sw={2.6} /></ScrollEnd>
    <Thumb h={thumb} />
    <ScrollEnd><Chevron w={13} h={9} color="#555" sw={2.6} /></ScrollEnd>
  </ScrollBar>
);

export default function App() {
  return (
    <Screen>
      <Global />
      <TopStrip>
        <StripPart w={293} bg="#faf9f7" line />
        <StripPart w={27} />
        <svg width="72" height="11">
          <defs>
            <linearGradient id="shade" x1="0" x2="1"><stop offset="0" stopColor="#fff" /><stop offset="1" stopColor="#6c6868" /></linearGradient>
          </defs>
          <path d="M0 0h22l16 11H26z" fill="url(#shade)" />
          <path d="M16 0h22v9z" fill="#ff4343" />
          <rect x="39" width="32" height="11" fill="#c1c1c1" />
        </svg>
        <StripPart w={94} line />
      </TopStrip>
      <Window>
        <TitleBar>
          <QuickBar>
            <DownArrow />
            <Divider l={9} r={19} />
            <CheckDoc w={17} h={22} sw={2} />
            <Gap w={16} />
            <FolderIcon w={14} h={21} />
            <Gap w={16} />
            <svg width="9" height="12"><path d="M0 4h9" stroke="#000" strokeWidth="1.500" /><path d="M.5 7.500h8l-4 4z" /></svg>
            <Divider l={16} r={0} />
          </QuickBar>
          <ManageTab>Gestisci</ManageTab>
          <WindowTitle>Downloads</WindowTitle>
          <Controls>
            <svg width="15" height="15"><path d="M0 7.500h15" stroke="#999" /></svg>
            <svg width="16" height="16" fill="none" stroke="#888"><path d="M.5 3.500h11v11H.5zM3.500 3.500v-3h11v11h-3" /></svg>
            <svg width="16" height="16" stroke="#888"><path d="M.5.5l15 15M15.500.5l-15 15" /></svg>
          </Controls>
        </TitleBar>
        <Tabs>
          <Tab w={84} kind="file">File</Tab>
          <Tab w={83} kind="active">Home</Tab>
          <Tab w={107}>Condividi</Tab>
          <Tab w={108}>Visualizza</Tab>
          <Gap w={3} />
          <Tab w={196} kind="tool">Strumenti applicazioni</Tab>
          <TabsEnd>
            <Chevron dir="up" w={17} h={10} color="#999" />
            <Help>?</Help>
          </TabsEnd>
        </Tabs>
        <Ribbon>
          <Group w={434}>
            <GroupBody l={9}>
              <BigButton w={110} off icon={<PinIcon size={31} color="#b0bfd5" />} lines={["Aggiungi ad", "Accesso rapido"]} />
              <BigButton w={62} icon={<CopyPages />} lines={["Copia"]} />
              <BigButton w={62} off icon={<Clipboard />} lines={["Incolla"]} />
              <Stack l={6}>
                <SmallButton icon={<Scissors />} text="Taglia" />
                <SmallButton icon={<PathIcon />} text="Copia percorso" />
                <SmallButton off icon={<LinkPaste />} text="Incolla collegamento" />
              </Stack>
            </GroupBody>
            <GroupName>Appunti</GroupName>
          </Group>
          <Group w={286}>
            <GroupBody l={5}>
              <BigButton w={62} icon={<MoveTo />} lines={["Sposta", "in"]} caret />
              <BigButton w={61} icon={<CopyTo />} lines={["Copia", "in"]} caret />
              <ThickSep />
              <BigButton w={62} l={4} icon={<RedX />} lines={["Elimina", ""]} caret />
              <BigButton w={74} icon={<RenameIcon />} lines={["Rinomina"]} />
            </GroupBody>
            <GroupName r={4}>Organizza</GroupName>
          </Group>
          <Group w={244}>
            <GroupBody l={5}>
              <BigButton w={60} icon={<BigFolder />} lines={["Nuova", "cartella"]} />
              <Stack l={7}>
                <SmallButton icon={<NewItem />} text="Nuovo elemento" caret />
                <SmallButton icon={<EasyAccess />} text="Accesso facilitato" caret />
              </Stack>
            </GroupBody>
            <GroupName r={3}>Nuovo</GroupName>
          </Group>
          <Group w={200}>
            <GroupBody l={5}>
              <BigButton w={70} icon={<CheckDoc w={33} h={43} />} lines={["Proprietà", ""]} caret />
              <Stack l={6} row={33}>
                <SmallButton icon={<OpenIcon />} text="Apri" caret />
                <SmallButton off icon={<EditIcon />} text="Modifica" />
                <SmallButton icon={<HistoryIcon />} text="Cronologia" />
              </Stack>
            </GroupBody>
            <GroupName r={4}>Apri</GroupName>
          </Group>
          <Group w={172}>
            <GroupBody l={10}>
              <Stack l={0}>
                <SmallButton icon={<SelectGrid on={[true, true, true, true]} />} text="Seleziona tutto" />
                <SmallButton icon={<SelectGrid on={[false, false, false, false]} />} text="Deseleziona tutto" />
                <SmallButton icon={<SelectGrid on={[false, true, true, false]} />} text="Inverti selezione" />
              </Stack>
            </GroupBody>
            <GroupName r={5}>Seleziona</GroupName>
          </Group>
        </Ribbon>
        <AddressRow>
          <NavButtons>
            <svg width="20" height="16" fill="none" stroke="#666" strokeWidth="2.200"><path d="M1.500 8H20M9 1L1.800 8 9 15" /></svg>
            <Gap w={27} />
            <svg width="20" height="16" fill="none" stroke="#d8d8d8" strokeWidth="2.200"><path d="M0 8h18.500M11 1l7.200 7-7.200 7" /></svg>
            <Gap w={18} />
            <Chevron w={10} h={7} sw={2.4} />
            <Gap w={18} />
            <svg width="16" height="20" fill="none" stroke="#666" strokeWidth="1.800"><path d="M8 20V1.500M1 8.500l7-7 7 7" /></svg>
          </NavButtons>
          <Field w={1306}>
            <Gap w={5} />
            <DownArrow w={19} />
            <Gap w={12} />
            <Chevron dir="right" w={8} h={11} sw={2.4} />
            <Gap w={13} />
            <Crumb w={97}>Questo PC</Crumb>
            <Chevron dir="right" w={8} h={11} sw={2.4} />
            <Gap w={13} />
            <Crumb w={100}>Downloads</Crumb>
            <FieldEnd>
              <Chevron w={14} h={9} sw={2.6} />
              <RefreshCell><Refresh /></RefreshCell>
            </FieldEnd>
          </Field>
          <Gap w={12} />
          <Field w={433}>
            <Gap w={20} />
            <svg width="19" height="22" fill="none" stroke="#777" strokeWidth="1.300"><circle cx="12.500" cy="7" r="6" /><path d="M8 11.500L.7 19" /></svg>
            <SearchText>Cerca in Downloads</SearchText>
          </Field>
        </AddressRow>
        <Body>
          <Tree>
            {tree.map((n, i) => (
              <TreeRow key={i} root={n.root} gap={n.gap} selected={n.sel}>
                <TreeIcon>{n.icon || <FolderIcon />}</TreeIcon>
                <TreeText ls={n.ls}>{n.t}</TreeText>
                {n.pin && <PinIcon />}
              </TreeRow>
            ))}
          </Tree>
          <Scroller w={25} thumb={237} />
          <Pane>
            {sections.map((s) => (
              <Section key={s.name}>
                <SectionHead>
                  <Chevron w={15} h={9} color="#777" sw={1.4} />
                  <span>{s.name}</span>
                  <Rule />
                </SectionHead>
                <Tiles>
                  {s.files.map((f, i) => (
                    <Tile key={i} selected={f.sel}>
                      {f.icon}
                      {f.lines.map((l) => <TileText key={l} ls={f.ls}>{l}</TileText>)}
                    </Tile>
                  ))}
                </Tiles>
              </Section>
            ))}
          </Pane>
          <Scroller w={25} thumb={213} />
        </Body>
        <Status>
          <span>101 elementi</span>
          <StatusSep l={15} r={17} />
          <span>1 elemento selezionato&nbsp; 79,9 MB</span>
          <StatusSep l={16} r={0} />
          <Views>
            <svg width="21" height="21" fill="none">
              {[0, 5, 10, 15].map((y, i) => (
                <g key={y}>
                  <rect x=".5" y={y + 0.5} width="5" height="5" stroke="#999" />
                  <rect x="2" y={y + 2} width="2" height="2" fill={["#3f7f8f", "#6f8a3a", "#b3402b", "#9ab0c4"][i]} />
                  <path d={`M7 ${y + 2.5}h6M15 ${y + 2.5}h6`} stroke="#777" />
                </g>
              ))}
            </svg>
            <ViewOn><PhotoIcon /></ViewOn>
          </Views>
        </Status>
      </Window>
      <Taskbar>
        <TaskSearch>
          <svg width="24" height="9"><path d="M2 9q1-6 11-7 9 1 9 7z" fill="#8b8b8e" /><path d="M5 9q3-5 8-3l1 3z" fill="#5b4a48" /></svg>
        </TaskSearch>
        <TaskActive />
        <Clock>21:10</Clock>
        <TaskEdge />
      </Taskbar>
      <Recorder>
        <RecHead>
          <span>Image Recording</span>
          <svg width="17" height="17" stroke="#f1f1f1" strokeWidth="1.600"><path d="M.7.7l15.600 15.600M16.300.7L.7 16.300" /></svg>
        </RecHead>
        <RecTools>
          <RecButton l={19} w={57} kind="save" icon={<SaveIcon />} lines={["Save", "& Exit"]} />
          <RecSep l={14} r={10} />
          <RecButton w={60} kind="on" icon={<ClickImage />} lines={["Click", "Image"]} />
          <RecButton w={58} icon={<ClickText />} lines={["Click", "Text"]} />
          <RecButton w={56} icon={<TypeIcon />} lines={["Type", ""]} caret />
          <RecButton w={72} icon={<SelectCopy />} lines={["Select", "& Copy"]} />
          <RecButton w={89} icon={<ScrapeIcon />} lines={["Screen", "Scraping"]} caret />
          <RecButton w={78} drop={2} icon={<ElementIcon />} lines={["Element", ""]} caret />
          <RecButton w={65} drop={2} icon={<TextIcon />} lines={["Text", ""]} caret />
          <RecButton w={63} drop={2} icon={<ImageIcon />} lines={["Image", ""]} caret />
          <RecSep l={14} r={0} />
        </RecTools>
      </Recorder>
    </Screen>
  );
}
